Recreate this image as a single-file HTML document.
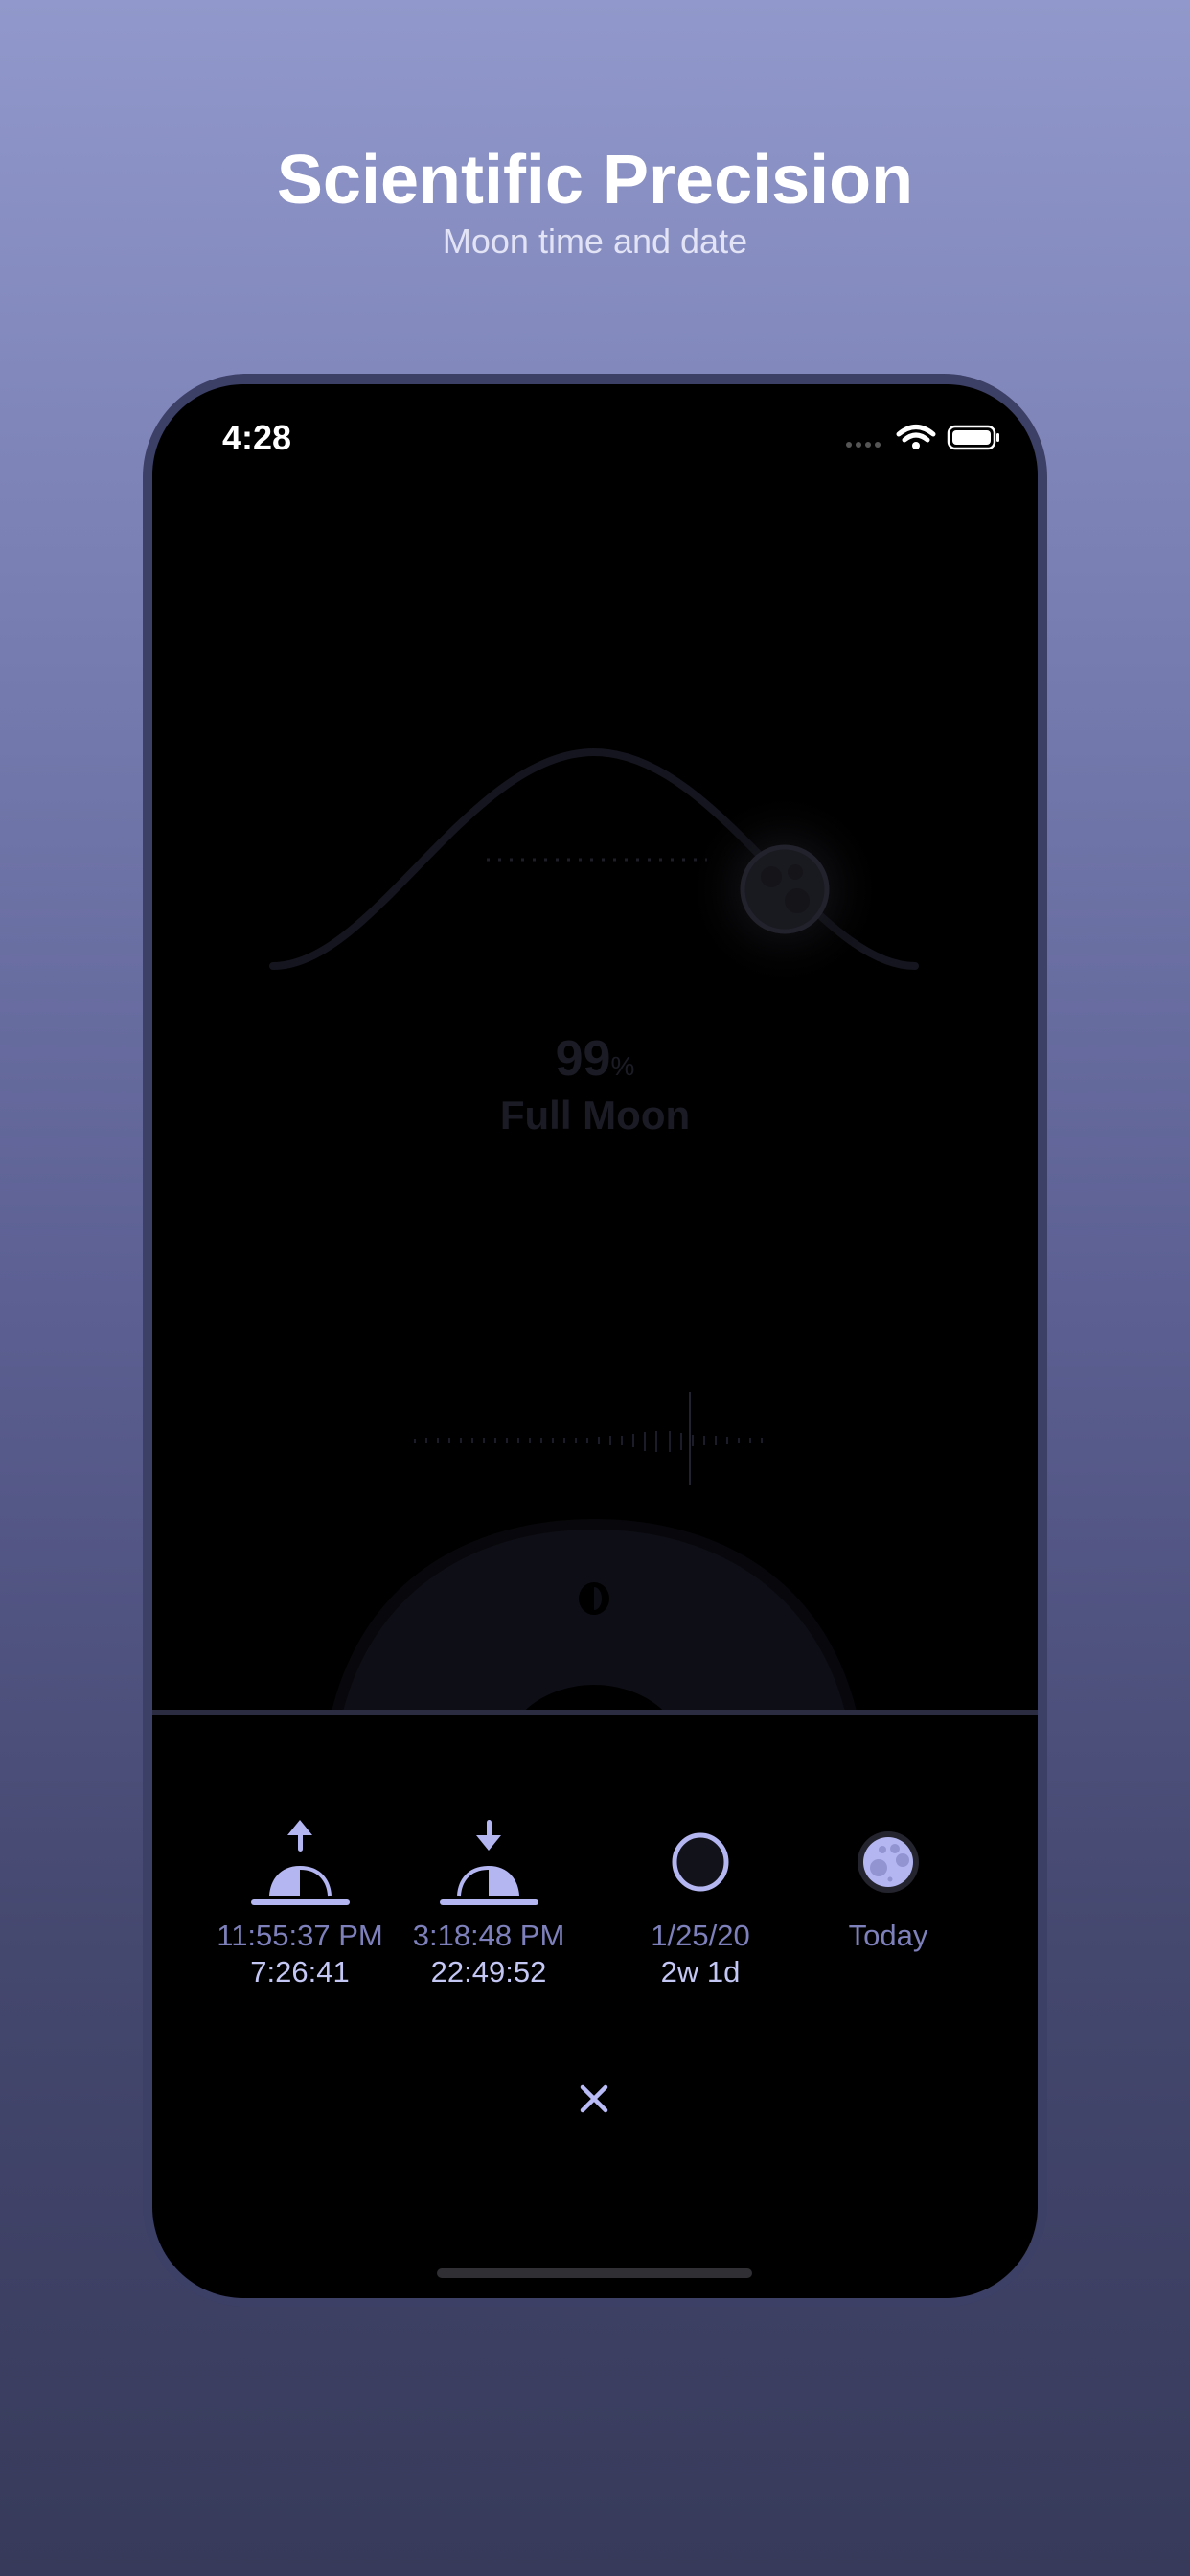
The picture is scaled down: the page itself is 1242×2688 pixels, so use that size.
<!DOCTYPE html>
<html><head><meta charset="utf-8"><style>
html,body{margin:0;padding:0;width:1242px;height:2688px;overflow:hidden;}
body{background:linear-gradient(180deg,#9198cb 0%,#7c82b6 20%,#5c6093 50%,#45486f 75%,#373a5a 100%);font-family:"Liberation Sans",sans-serif;}
svg{position:absolute;left:0;top:0;}
</style></head><body>
<svg width="1242" height="2688" viewBox="0 0 1242 2688">
<defs>
<radialGradient id="glow" cx="0.5" cy="0.5" r="0.5">
<stop offset="0" stop-color="#22222c" stop-opacity="0.8"/>
<stop offset="0.5" stop-color="#111116" stop-opacity="0.5"/>
<stop offset="1" stop-color="#000" stop-opacity="0"/>
</radialGradient>
<clipPath id="scr"><rect x="159" y="401" width="924" height="1997" rx="95"/></clipPath>
</defs>
<text x="621" y="212" text-anchor="middle" font-size="72" font-weight="bold" fill="#fff" font-family="Liberation Sans, sans-serif">Scientific Precision</text>
<text x="621" y="264" text-anchor="middle" font-size="36" fill="#e2e3f5" font-family="Liberation Sans, sans-serif">Moon time and date</text>
<rect x="149" y="390" width="944" height="2017" rx="108" fill="#3c3f66"/>
<rect x="159" y="401" width="924" height="1997" rx="95" fill="#000"/>
<g clip-path="url(#scr)">
<text x="232" y="469" font-size="36" font-weight="bold" fill="#fff">4:28</text>
<g fill="#555">
<circle cx="886" cy="464" r="3"/><circle cx="896" cy="464" r="3"/><circle cx="906" cy="464" r="3"/><circle cx="916" cy="464" r="3"/>
</g>
<path d="M938 453 Q956 438 974 453" stroke="#fff" stroke-width="5" fill="none" stroke-linecap="round"/>
<path d="M944 459 Q956 449 968 459" stroke="#fff" stroke-width="5" fill="none" stroke-linecap="round"/>
<circle cx="956" cy="465" r="4" fill="#fff"/>
<rect x="990" y="445" width="48" height="23" rx="7" fill="none" stroke="#fff" stroke-width="2.5"/>
<rect x="994" y="449" width="40" height="15" rx="4" fill="#fff"/>
<rect x="1040" y="452" width="3" height="9" rx="1.5" fill="#fff"/>
<path d="M285 1008 C390 1008 490 785 620 785 C750 785 850 1008 955 1008" stroke="#15151f" stroke-width="8" fill="none" stroke-linecap="round"/>
<line x1="508" y1="897" x2="738" y2="897" stroke="#1e1e28" stroke-width="3" stroke-dasharray="3 9"/>
<circle cx="819" cy="928" r="105" fill="url(#glow)"/>
<circle cx="819" cy="928" r="44" fill="#191920" stroke="#22222c" stroke-width="5"/>
<circle cx="805" cy="915" r="11" fill="#141419"/><circle cx="830" cy="910" r="8" fill="#141419"/><circle cx="832" cy="940" r="13" fill="#141419"/>
<text x="621" y="1122" text-anchor="middle" font-size="52" font-weight="bold" fill="#1b1b25">99<tspan font-size="28" font-weight="normal">%</tspan></text>
<text x="621" y="1178" text-anchor="middle" font-size="42" font-weight="bold" fill="#1b1b25">Full Moon</text>
<g stroke="#1c1c28" stroke-width="2">
<path d="M433 1502v4M445 1500v6M457 1500v6M469 1500v6M481 1500v6M493 1500v6M505 1500v6M517 1500v6M529 1500v6M541 1500v6M553 1500v6M565 1500v6M577 1500v6M589 1500v6M601 1500v6M613 1500v6M625 1499v8M637 1498v10M649 1498v10M661 1496v14M673 1494v20M685 1493v22M699 1493v22M711 1495v18M723 1497v12M735 1498v10M747 1498v10M759 1499v8M771 1500v6M783 1500v6M795 1500v6"/>
<path d="M720 1453v97" stroke="#22222e"/>
</g>
<path d="M345 1790 C380 1640 500 1585 620 1585 C740 1585 860 1640 895 1790Z" fill="#08080c"/>
<path d="M357 1790 C390 1655 500 1596 620 1596 C740 1596 850 1655 883 1790Z" fill="#0e0e16"/>
<ellipse cx="620" cy="1668" rx="16" ry="17" fill="#000"/>
<path d="M620 1656 A8 12 0 0 1 620 1680Z" fill="#0e0e16"/>
<path d="M543 1790 C560 1770 590 1758 620 1758 C650 1758 680 1770 697 1790Z" fill="#000"/>
<rect x="159" y="1784" width="924" height="6" fill="#2b2b42"/>
<g fill="#b4b6f2" stroke="none">
<rect x="311" y="1908" width="5" height="24" rx="2.5"/>
<path d="M313 1899 L326 1915 L300 1915Z"/>
<path d="M313 1947 C292 1947 282 1962 281 1978 L313 1978Z"/>
<rect x="262" y="1982" width="103" height="6" rx="3"/>
<rect x="508" y="1899" width="5" height="22" rx="2.5"/>
<path d="M510 1931 L523 1915 L497 1915Z"/>
<path d="M510 1947 C531 1947 541 1962 542 1978 L510 1978Z"/>
<rect x="459" y="1982" width="103" height="6" rx="3"/>
</g>
<path d="M313 1949 C334 1949 343 1963 344 1978" stroke="#b4b6f2" stroke-width="4" fill="none"/>
<path d="M510 1949 C489 1949 480 1963 479 1978" stroke="#b4b6f2" stroke-width="4" fill="none"/>
<ellipse cx="731" cy="1943" rx="27" ry="28" fill="#12121a" stroke="#b4b6f2" stroke-width="5"/>
<circle cx="927" cy="1943" r="32" fill="#24242e"/>
<circle cx="927" cy="1943" r="26" fill="#b4b6f2"/>
<circle cx="917" cy="1949" r="9" fill="#9294d2"/><circle cx="934" cy="1929" r="5" fill="#9294d2"/><circle cx="942" cy="1941" r="7" fill="#9294d2"/><circle cx="921" cy="1930" r="4" fill="#9294d2"/><circle cx="929" cy="1961" r="2.5" fill="#9294d2"/>
<g font-size="31" text-anchor="middle">
<text x="313" y="2030" fill="#7d80ba">11:55:37 PM</text>
<text x="313" y="2068" fill="#c4c6f4">7:26:41</text>
<text x="510" y="2030" fill="#7d80ba">3:18:48 PM</text>
<text x="510" y="2068" fill="#c4c6f4">22:49:52</text>
<text x="731" y="2030" fill="#7d80ba">1/25/20</text>
<text x="731" y="2068" fill="#c4c6f4">2w 1d</text>
<text x="927" y="2030" fill="#7d80ba">Today</text>
</g>
<path d="M608 2178 L632 2202 M632 2178 L608 2202" stroke="#b8bbf5" stroke-width="4.5" stroke-linecap="round"/>
<rect x="456" y="2367" width="329" height="10" rx="5" fill="#303034"/>
</g>
</svg>
</body></html>
